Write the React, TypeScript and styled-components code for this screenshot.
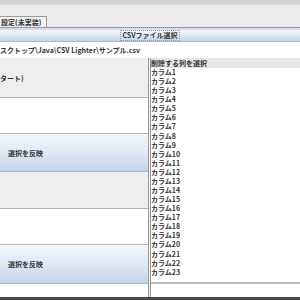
import styled, { createGlobalStyle } from 'styled-components'

const GlobalStyle = createGlobalStyle`
  html, body {
    margin: 0;
    padding: 0;
    background: #eeeeee;
  }
  body {
    font-family: "Noto Sans CJK JP", "DejaVu Sans", sans-serif;
  }
`

const Window = styled.div({
  width: 300,
  height: 300,
  overflow: 'hidden',
  display: 'flex',
  flexDirection: 'column',
  background: '#eeeeee',
  color: '#333',
  fontSize: 7,
  fontWeight: 700,
})

const TopStrip = styled.div({
  height: 16,
  flexShrink: 0,
  background: 'linear-gradient(#d4d4d4 0, #d4d4d4 4px, #ececec 5px, #ececec 100%)',
})

const TabBar = styled.div({
  height: 11,
  flexShrink: 0,
  display: 'flex',
  borderBottom: '1px solid #9a9a9a',
  background: '#ececec',
})

const Tab = styled.div({
  width: 45,
  display: 'flex',
  alignItems: 'center',
  paddingLeft: 1,
  borderTop: '1px solid #9a9a9a',
  borderRight: '1px solid #9a9a9a',
  background: '#f2f2f2',
  whiteSpace: 'nowrap',
})

const Spacer = styled.div({
  height: 2,
  flexShrink: 0,
  background: '#d6dde6',
})

const ButtonFace = styled.div<{ $h: number; $center?: boolean }>((p) => ({
  height: p.$h,
  flexShrink: 0,
  display: 'flex',
  alignItems: 'center',
  justifyContent: p.$center ? 'center' : 'flex-start',
  paddingLeft: p.$center ? 0 : 8,
  background: 'linear-gradient(#f3f7fb, #dfe8f3 50%, #c4d4e8)',
  borderBottom: '1px solid #b0b8c2',
  whiteSpace: 'nowrap',
}))

const FocusLabel = styled.span({
  padding: '0 1px',
  outline: '1px dotted #8a9ab0',
  lineHeight: '9px',
})

const PathRow = styled.div({
  height: 16,
  flexShrink: 0,
  display: 'flex',
  alignItems: 'center',
  background: '#ffffff',
  whiteSpace: 'nowrap',
})

const Body = styled.div({
  flex: 1,
  display: 'flex',
  minHeight: 0,
})

const LeftCol = styled.div({
  width: 148,
  flexShrink: 0,
  display: 'flex',
  flexDirection: 'column',
  borderRight: '1px solid #9a9a9a',
  overflow: 'hidden',
})

const GraySection = styled.div<{ $h: number }>((p) => ({
  height: p.$h,
  flexShrink: 0,
  display: 'flex',
  alignItems: 'center',
  background: '#eeeeee',
  borderBottom: '1px solid #b4b4b4',
  whiteSpace: 'nowrap',
}))

const TextArea = styled.div<{ $h: number }>((p) => ({
  height: p.$h,
  flexShrink: 0,
  background: '#ffffff',
  borderBottom: '1px solid #b4b4b4',
}))

const Filler = styled.div({
  flex: 1,
  background: '#ffffff',
})

const RightCol = styled.div({
  flex: 1,
  display: 'flex',
  flexDirection: 'column',
  borderLeft: '1px solid #9a9a9a',
  marginLeft: 1,
  minWidth: 0,
})

const ListHeader = styled.div({
  height: 10,
  flexShrink: 0,
  display: 'flex',
  alignItems: 'center',
  background: '#e6e6e6',
  whiteSpace: 'nowrap',
})

const List = styled.div({
  height: 214,
  flexShrink: 0,
  overflow: 'hidden',
  background: '#ffffff',
  borderBottom: '2px solid #b8bec4',
})

const Row = styled.div({
  height: 9.09,
  lineHeight: '9.09px',
  fontSize: 7,
  whiteSpace: 'nowrap',
})

const BottomStrip = styled.div({
  height: 3,
  flexShrink: 0,
  background: '#4a4a4a',
})

const columns = Array.from({ length: 23 }, (_, i) => `カラム${i + 1}`)

function App() {
  return (
    <>
      <GlobalStyle />
      <Window>
        <TopStrip />
        <TabBar>
          <Tab>設定(未実装)</Tab>
        </TabBar>
        <Spacer />
        <ButtonFace $h={11} $center>
          <FocusLabel>CSVファイル選択</FocusLabel>
        </ButtonFace>
        <PathRow>スクトップ\Java\CSV Lighter\サンプル.csv</PathRow>
        <Body>
          <LeftCol>
            <GraySection $h={39}>タート)</GraySection>
            <TextArea $h={35} />
            <ButtonFace $h={37}>選択を反映</ButtonFace>
            <GraySection $h={36} />
            <TextArea $h={35} />
            <ButtonFace $h={38}>選択を反映</ButtonFace>
            <Filler />
          </LeftCol>
          <RightCol>
            <ListHeader>削除する列を選択</ListHeader>
            <List>
              {columns.map((c) => (
                <Row key={c}>{c}</Row>
              ))}
            </List>
            <Filler />
          </RightCol>
        </Body>
        <BottomStrip />
      </Window>
    </>
  )
}

export default App
